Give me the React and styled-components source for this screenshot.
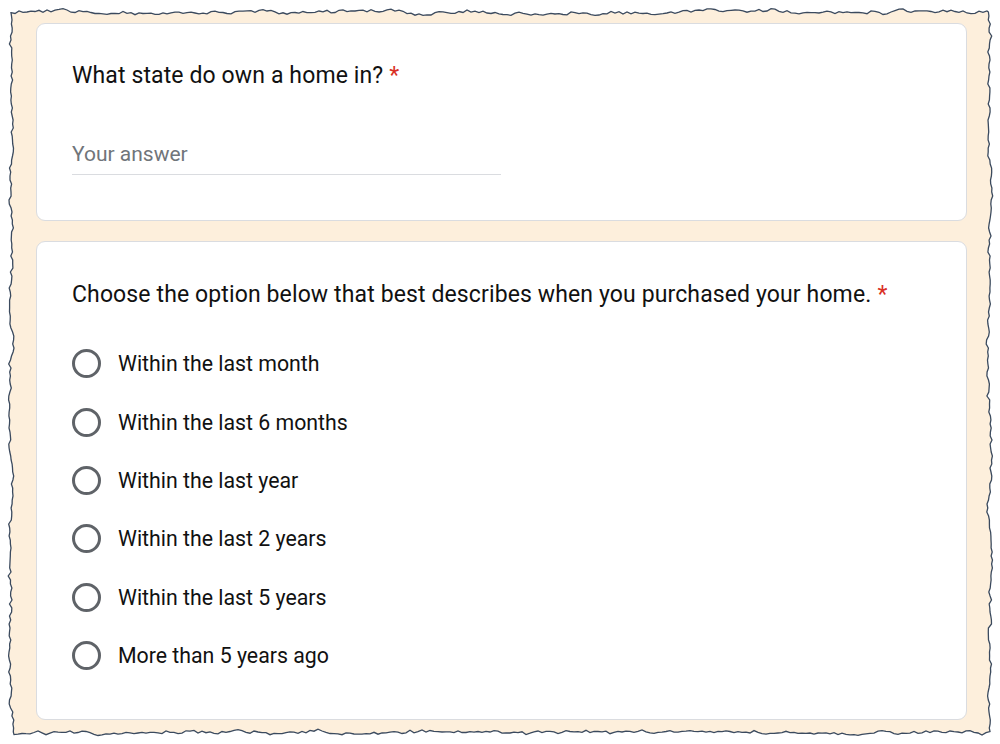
import React from "react";
import styled, { createGlobalStyle } from "styled-components";

const GlobalStyle = createGlobalStyle`
  html, body { margin: 0; padding: 0; background: #ffffff; }
  body { font-family: Roboto, "Noto Sans", Arial, sans-serif; }
`;

const Frame = styled.div`
  position: relative;
  width: 1000px;
  height: 744px;
  box-sizing: border-box;
  background: #fdefdc;
  padding: 23px 33px 24px 36px;
  display: flex;
  flex-direction: column;
  gap: 20px;
  overflow: hidden;
`;

const Card = styled.section`
  background: #ffffff;
  border: 1px solid #dadce0;
  border-radius: 9px;
  box-sizing: border-box;
  height: ${(p) => p.$h}px;
  padding: ${(p) => p.$pt}px 35px 0 35px;
  display: flex;
  flex-direction: column;
`;

const Question = styled.div`
  font-size: 23px;
  line-height: 30px;
  color: #111111;
  letter-spacing: 0.12px;
`;

const Required = styled.span`
  color: #d93025;
  margin-left: 6px;
`;

const AnswerField = styled.div`
  margin-top: 49px;
  width: 429px;
  height: 35px;
  box-sizing: border-box;
  border-bottom: 1px solid #dadce0;
  font-size: 21px;
  line-height: 28px;
  color: #70757a;
`;

const Options = styled.div`
  margin-top: 24px;
  display: flex;
  flex-direction: column;
`;

const Option = styled.label`
  height: 58.4px;
  display: flex;
  align-items: center;
  gap: 17px;
  font-size: 21.3px;
  color: #111111;
`;

const Radio = styled.span`
  width: 29px;
  height: 29px;
  box-sizing: border-box;
  border: 3px solid #5f6368;
  border-radius: 50%;
  flex: none;
`;

const Edge = styled.svg`
  position: absolute;
  left: 0;
  top: 0;
  pointer-events: none;
`;

function makeJagged() {
  let seed = 98765;
  const rnd = () => {
    seed = (seed * 1103515245 + 12345) % 2147483648;
    return seed / 2147483648;
  };
  const pts = [];
  const L = 11, T = 12, R = 990, B = 732;
  let drift = 0;
  const jit = () => {
    drift = drift * 0.8 + (rnd() - 0.5) * 2.6;
    return drift + (rnd() - 0.5) * 2;
  };
  for (let x = L; x < R; x += 4) pts.push([x, T + jit()]);
  for (let y = T; y < B; y += 4) pts.push([R + jit(), y]);
  for (let x = R; x > L; x -= 4) pts.push([x, B + jit()]);
  for (let y = B; y > T; y -= 4) pts.push([L + jit(), y]);
  return "M" + pts.map((p) => p[0].toFixed(1) + "," + p[1].toFixed(1)).join("L") + "Z";
}

const jagged = makeJagged();

const options = [
  "Within the last month",
  "Within the last 6 months",
  "Within the last year",
  "Within the last 2 years",
  "Within the last 5 years",
  "More than 5 years ago",
];

export default function App() {
  return (
    <>
      <GlobalStyle />
      <Frame>
        <Card $h={199} $pt={37}>
          <Question>
            What state do own a home in?<Required>*</Required>
          </Question>
          <AnswerField>Your answer</AnswerField>
        </Card>
        <Card $h={480} $pt={38}>
          <Question>
            Choose the option below that best describes when you purchased your home.
            <Required>*</Required>
          </Question>
          <Options>
            {options.map((o) => (
              <Option key={o}>
                <Radio />
                {o}
              </Option>
            ))}
          </Options>
        </Card>
        <Edge width="1000" height="744" viewBox="0 0 1000 744">
          <path d={"M0,0H1000V744H0Z" + jagged} fill="#ffffff" fillRule="evenodd" />
          <path d={jagged} fill="none" stroke="#3b4a5e" strokeWidth="1.3" />
        </Edge>
      </Frame>
    </>
  );
}
